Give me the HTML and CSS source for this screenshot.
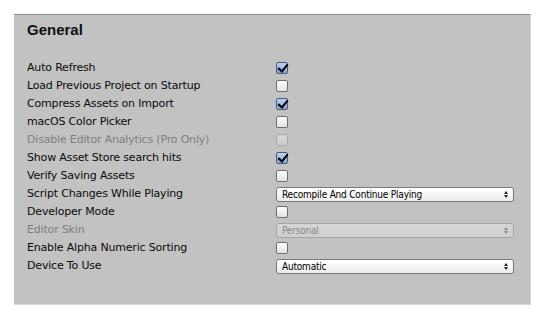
FILE: index.html
```html
<!DOCTYPE html>
<html>
<head>
<meta charset="utf-8">
<link rel="stylesheet" href="styles.css">
</head>
<body>
<div class="panel">
  <h1 class="title">General</h1>
  <div class="grid">
    <div class="label">Auto Refresh</div>
    <div class="ctrl"><span class="cb checked"></span></div>

    <div class="label">Load Previous Project on Startup</div>
    <div class="ctrl"><span class="cb"></span></div>

    <div class="label">Compress Assets on Import</div>
    <div class="ctrl"><span class="cb checked"></span></div>

    <div class="label">macOS Color Picker</div>
    <div class="ctrl"><span class="cb"></span></div>

    <div class="label disabled">Disable Editor Analytics (Pro Only)</div>
    <div class="ctrl"><span class="cb off"></span></div>

    <div class="label">Show Asset Store search hits</div>
    <div class="ctrl"><span class="cb checked"></span></div>

    <div class="label">Verify Saving Assets</div>
    <div class="ctrl"><span class="cb"></span></div>

    <div class="label">Script Changes While Playing</div>
    <div class="ctrl"><span class="popup">Recompile And Continue Playing<span class="arrows"></span></span></div>

    <div class="label">Developer Mode</div>
    <div class="ctrl"><span class="cb"></span></div>

    <div class="label disabled">Editor Skin</div>
    <div class="ctrl"><span class="popup off">Personal<span class="arrows"></span></span></div>

    <div class="label">Enable Alpha Numeric Sorting</div>
    <div class="ctrl"><span class="cb"></span></div>

    <div class="label">Device To Use</div>
    <div class="ctrl"><span class="popup">Automatic<span class="arrows"></span></span></div>
  </div>
</div>
</body>
</html>
```
FILE: styles.css
```css
html, body {
  margin: 0;
  padding: 0;
  background: #ffffff;
}
body {
  padding: 14px 0 0 14px;
  font-family: "DejaVu Sans", "Liberation Sans", sans-serif;
}
.panel {
  box-sizing: border-box;
  width: 517px;
  height: 291px;
  background: #c2c2c2;
  border-top: 1px solid #8e8e8e;
  border-right: 1px solid #d4d4d4;
  border-bottom: 1px solid #d8d8d8;
  padding: 0 16px 0 13px;
}
.title {
  margin: 0;
  padding-top: 5px;
  height: 39px;
  font-family: "Liberation Sans", Arial, sans-serif;
  font-size: 15px;
  font-weight: bold;
  line-height: 20px;
  color: #111;
}
.grid {
  display: grid;
  grid-template-columns: 249px 238px;
  grid-auto-rows: 18px;
}
.label {
  font-size: 11px;
  letter-spacing: -0.18px;
  line-height: 18px;
  color: #0a0a0a;
  white-space: nowrap;
}
.label.disabled {
  color: #7f7f7f;
}
.ctrl {
  display: flex;
  align-items: center;
}
.cb {
  box-sizing: border-box;
  width: 12px;
  height: 12px;
  border: 1px solid #6e6e6e;
  border-radius: 2px;
  background: linear-gradient(#fdfdfd, #e3e3e3);
  position: relative;
}
.cb.off {
  border-color: #a8a8a8;
  background: linear-gradient(#d6d6d6, #cccccc);
}
.cb.checked {
  border-color: #4b5d74;
  background: linear-gradient(#b7d1f1, #7fa7dc);
}
.cb.checked::after {
  content: "";
  position: absolute;
  left: 3px;
  top: -1px;
  width: 4px;
  height: 8px;
  border-right: 2px solid #000;
  border-bottom: 2px solid #000;
  transform: rotate(40deg);
}
.popup {
  box-sizing: border-box;
  position: relative;
  width: 238px;
  height: 15px;
  border: 1px solid #7a7a7a;
  border-radius: 3px;
  background: linear-gradient(#ffffff, #ececec);
  font-family: "DejaVu Sans Condensed", "DejaVu Sans", sans-serif;
  font-size: 10px;
  letter-spacing: -0.2px;
  line-height: 13px;
  padding-left: 5px;
  color: #000;
  white-space: nowrap;
}
.popup.off {
  border-color: #a5a5a5;
  background: linear-gradient(#d6d6d6, #cfcfcf);
  color: #888;
}
.arrows {
  position: absolute;
  right: 7px;
  top: 3px;
  width: 0;
  height: 7px;
}
.arrows::before, .arrows::after {
  content: "";
  position: absolute;
  left: -2px;
  border-left: 2px solid transparent;
  border-right: 2px solid transparent;
}
.arrows::before {
  top: 0;
  border-bottom: 3px solid #222;
}
.arrows::after {
  top: 4px;
  border-top: 3px solid #222;
}
.popup.off .arrows::before { border-bottom-color: #888; }
.popup.off .arrows::after { border-top-color: #888; }
```
